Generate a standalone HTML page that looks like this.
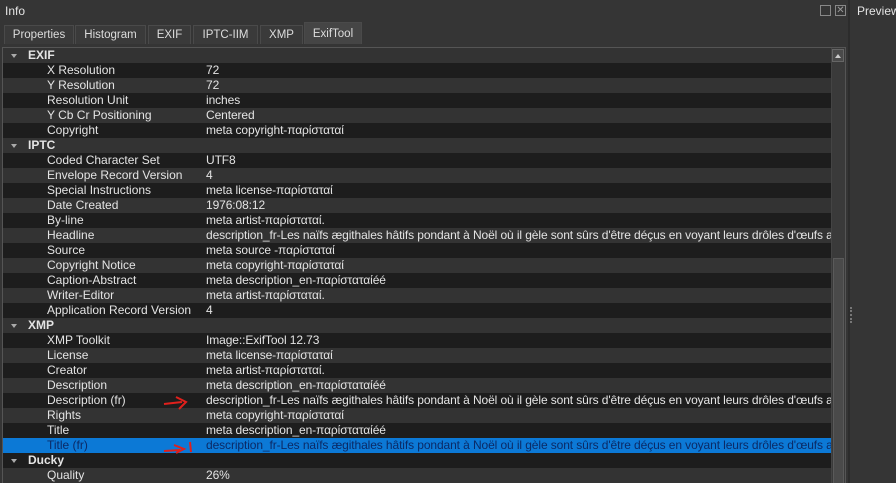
<!DOCTYPE html>
<html><head><meta charset="utf-8"><style>
*{margin:0;padding:0;box-sizing:border-box}
body{width:896px;height:483px;background:#353535;font-family:"Liberation Sans","DejaVu Sans",sans-serif;font-size:12px;color:#e4e4e4;position:relative;overflow:hidden}
.t{position:absolute;white-space:nowrap}
.tab{position:absolute;top:25px;height:19px;background:#3a3a3a;border:1px solid #4a4a4a;border-bottom:none;text-align:center;line-height:18px;font-size:11.5px;color:#ddd}
.tab.a{top:22px;height:22px;background:#454545;line-height:22px}
#tbl{position:absolute;left:2px;top:47px;width:844px;height:436px;border:1px solid #555;border-bottom:none;overflow:hidden;background:#333}
.r{position:absolute;left:0;width:828px;height:15px;line-height:15px;white-space:nowrap;overflow:hidden}
.r.d{background:#1d1d1d}
.r.l{background:#333}
.r.h{background:#333;font-weight:bold}
.r.s{background:#0c79d6;color:#0b2a66}
.k{position:absolute;left:44px}
.v{position:absolute;left:203px;letter-spacing:-0.1px}
.hk{position:absolute;left:25px}
.ar{position:absolute;left:8px;top:6px;width:0;height:0;border-left:3px solid transparent;border-right:3px solid transparent;border-top:4px solid #aaa}
</style></head><body>
<div class="t" style="left:5px;top:4px;font-size:12px">Info</div>
<div class="t" style="left:820px;top:5px;width:11px;height:11px;border:1px solid #888"></div>
<div class="t" style="left:835px;top:5px;width:11px;height:11px;border:1px solid #888;font-size:10px;line-height:9px;text-align:center;color:#999">✕</div>
<div class="t" style="left:857px;top:4px;font-size:12px">Preview</div>
<div class="t" style="left:848px;top:0;width:2px;height:483px;background:#2c2c2c"></div>
<div class="t" style="left:850px;top:307px;width:2px;height:16px;border-left:2px dotted #777"></div>
<div class="tab" style="left:4px;width:70px">Properties</div>
<div class="tab" style="left:75px;width:71px">Histogram</div>
<div class="tab" style="left:148px;width:43px">EXIF</div>
<div class="tab" style="left:193px;width:65px">IPTC-IIM</div>
<div class="tab" style="left:260px;width:43px">XMP</div>
<div class="tab a" style="left:304px;width:58px">ExifTool</div>
<div id="tbl">
<div class="r h" style="top:0"><span class="ar"></span><span class="hk">EXIF</span></div>
<div class="r d" style="top:15px"><span class="k">X Resolution</span><span class="v">72</span></div>
<div class="r l" style="top:30px"><span class="k">Y Resolution</span><span class="v">72</span></div>
<div class="r d" style="top:45px"><span class="k">Resolution Unit</span><span class="v">inches</span></div>
<div class="r l" style="top:60px"><span class="k">Y Cb Cr Positioning</span><span class="v">Centered</span></div>
<div class="r d" style="top:75px"><span class="k">Copyright</span><span class="v">meta copyright-παρίσταταί</span></div>
<div class="r h" style="top:90px"><span class="ar"></span><span class="hk">IPTC</span></div>
<div class="r d" style="top:105px"><span class="k">Coded Character Set</span><span class="v">UTF8</span></div>
<div class="r l" style="top:120px"><span class="k">Envelope Record Version</span><span class="v">4</span></div>
<div class="r d" style="top:135px"><span class="k">Special Instructions</span><span class="v">meta license-παρίσταταί</span></div>
<div class="r l" style="top:150px"><span class="k">Date Created</span><span class="v">1976:08:12</span></div>
<div class="r d" style="top:165px"><span class="k">By-line</span><span class="v">meta artist-παρίσταταί.</span></div>
<div class="r l" style="top:180px"><span class="k">Headline</span><span class="v">description_fr-Les naïfs ægithales hâtifs pondant à Noël où il gèle sont sûrs d'être déçus en voyant leurs drôles d'œufs abîmés</span></div>
<div class="r d" style="top:195px"><span class="k">Source</span><span class="v">meta source -παρίσταταί</span></div>
<div class="r l" style="top:210px"><span class="k">Copyright Notice</span><span class="v">meta copyright-παρίσταταί</span></div>
<div class="r d" style="top:225px"><span class="k">Caption-Abstract</span><span class="v">meta description_en-παρίσταταίéé</span></div>
<div class="r l" style="top:240px"><span class="k">Writer-Editor</span><span class="v">meta artist-παρίσταταί.</span></div>
<div class="r d" style="top:255px"><span class="k">Application Record Version</span><span class="v">4</span></div>
<div class="r h" style="top:270px"><span class="ar"></span><span class="hk">XMP</span></div>
<div class="r d" style="top:285px"><span class="k">XMP Toolkit</span><span class="v">Image::ExifTool 12.73</span></div>
<div class="r l" style="top:300px"><span class="k">License</span><span class="v">meta license-παρίσταταί</span></div>
<div class="r d" style="top:315px"><span class="k">Creator</span><span class="v">meta artist-παρίσταταί.</span></div>
<div class="r l" style="top:330px"><span class="k">Description</span><span class="v">meta description_en-παρίσταταίéé</span></div>
<div class="r d" style="top:345px"><span class="k">Description (fr)</span><span class="v">description_fr-Les naïfs ægithales hâtifs pondant à Noël où il gèle sont sûrs d'être déçus en voyant leurs drôles d'œufs abîmés</span></div>
<div class="r l" style="top:360px"><span class="k">Rights</span><span class="v">meta copyright-παρίσταταί</span></div>
<div class="r d" style="top:375px"><span class="k">Title</span><span class="v">meta description_en-παρίσταταίéé</span></div>
<div class="r s" style="top:390px"><span class="k">Title (fr)</span><span class="v">description_fr-Les naïfs ægithales hâtifs pondant à Noël où il gèle sont sûrs d'être déçus en voyant leurs drôles d'œufs abîmés</span></div>
<div class="r h" style="top:405px;background:#1d1d1d"><span class="ar"></span><span class="hk">Ducky</span></div>
<div class="r l" style="top:420px"><span class="k">Quality</span><span class="v">26%</span></div>
<div style="position:absolute;left:828px;top:0;width:14px;height:437px;background:#3a3a3a;border-left:1px solid #444"></div>
<div style="position:absolute;left:829px;top:1px;width:12px;height:13px;background:#4a4a4a;border:1px solid #666"><div style="margin:4px auto 0;width:0;height:0;border-left:3px solid transparent;border-right:3px solid transparent;border-bottom:4px solid #ccc"></div></div>
<div style="position:absolute;left:830px;top:210px;width:11px;height:230px;background:#4a4a4a;border:1px solid #5a5a5a"></div>
</div>
<svg class="t" style="left:160px;top:392px" width="40" height="20"><path d="M4 12 L22 10 M16 5 L26 10 L19 17" stroke="#e0201c" stroke-width="2" fill="none"/></svg>
<svg class="t" style="left:160px;top:438px" width="40" height="18"><path d="M4 13 L20 12 M14 7 L24 11 L16 15 M30 4 L31 14" stroke="#e0201c" stroke-width="2" fill="none"/></svg>
</body></html>
